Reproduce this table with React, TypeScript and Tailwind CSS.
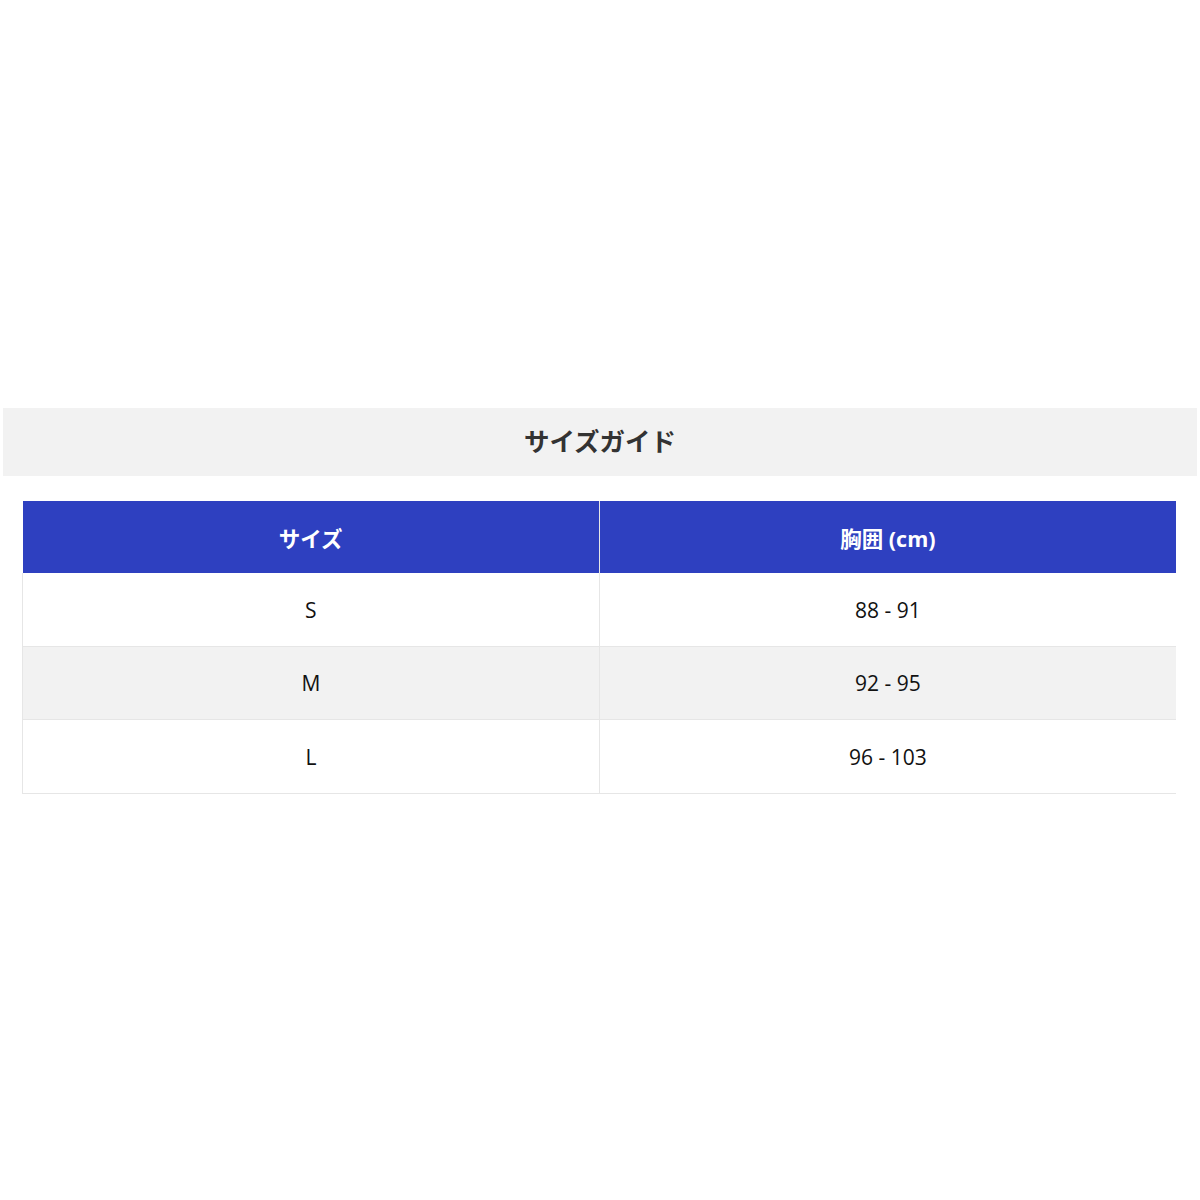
import React from "react";

const rows = [
  { size: "S", chest: "88 - 91" },
  { size: "M", chest: "92 - 95" },
  { size: "L", chest: "96 - 103" },
];

export default function App() {
  return (
    <div
      className="h-[1200px] w-[1200px] bg-white flex flex-col justify-center pt-[2px]"
      style={{ fontFamily: '"Open Sans", "Noto Sans CJK JP", sans-serif' }}
    >
      <div className="mx-[3px] h-[68px] bg-[#f2f2f2] flex items-center justify-center">
        <h2 className="text-[25.5px] font-bold text-[#333333] leading-none">サイズガイド</h2>
      </div>
      <div className="mt-[25px] ml-[22px] mr-[24px]">
        <table className="w-full border-collapse table-fixed">
          <thead>
            <tr className="bg-[#2e40c0] text-white h-[72px]">
              <th className="w-1/2 border-r border-[#e6e6e6] text-[21.5px] font-bold pt-[3px]">サイズ</th>
              <th className="w-1/2 text-[21.5px] font-bold pt-[3px]">胸囲 (cm)</th>
            </tr>
          </thead>
          <tbody>
            {rows.map((r, i) => (
              <tr
                key={r.size}
                className={`h-[73.4px] border-b border-[#e6e6e6] ${i % 2 === 1 ? "bg-[#f2f2f2]" : "bg-white"}`}
              >
                <td className="border-l border-r border-[#e6e6e6] text-center text-[21px] text-[#111111] pt-[2px]">
                  {r.size}
                </td>
                <td className="text-center text-[21px] text-[#111111] pt-[2px]">{r.chest}</td>
              </tr>
            ))}
          </tbody>
        </table>
      </div>
    </div>
  );
}
